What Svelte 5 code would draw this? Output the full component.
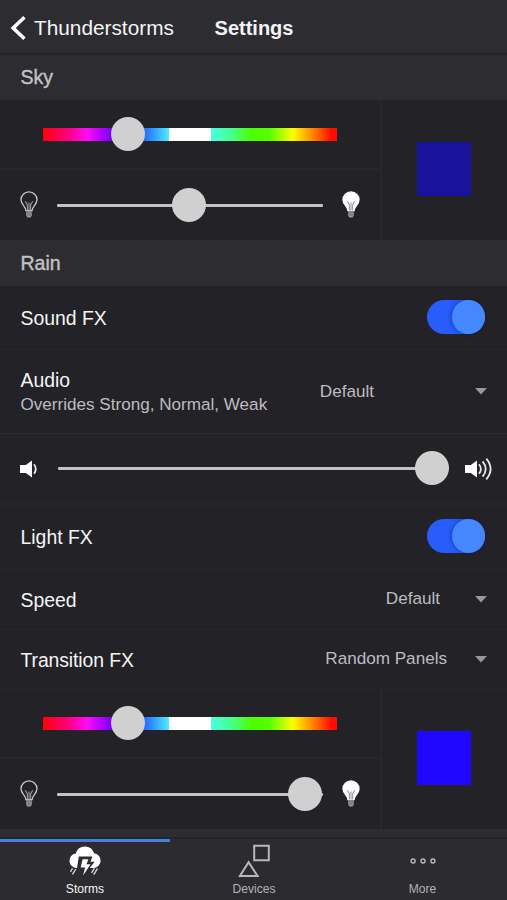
<script>
    let sky = $state({ hue: 26.2, brightness: 49.6, color: '#18129c' });
    let rain = $state({ hue: 26.2, brightness: 99.6, color: '#1f06ff' });
    let volume = $state(100);
    let soundFx = $state(true);
    let lightFx = $state(true);
    let activeTab = $state('Storms');

    const tabs = ['Storms', 'Devices', 'More'];
</script>

{#snippet bulb(on)}
    <svg class="bulb" class:on width="18" height="28" viewBox="0 0 18 28">
        <path class="glass" d="M5.9 19.6C5.7 15.5 1 13.6 1 8.8a8 7.9 0 0 1 16 0c0 4.8-4.7 6.7-4.9 10.8z" />
        <path class="wire" d="M7.4 19.5V14L5.3 10.2M10.6 19.5V14l2.1-3.8M9 19.5v-8" />
        <path class="base" d="M6.1 20.2h5.8v4.2l-1.3 2H7.4l-1.3-2z" />
        <path class="thread" d="M6.1 21.9h5.8M6.4 24.1h5.2" />
    </svg>
{/snippet}

{#snippet colorPanel(light)}
    <div class="color-panel">
        <div class="controls">
            <div class="hue-row">
                <input class="hue" type="range" step="any" aria-label="Hue" bind:value={light.hue}>
            </div>
            <div class="light-row">
                {@render bulb(false)}
                <input type="range" step="any" aria-label="Brightness" bind:value={light.brightness}>
                {@render bulb(true)}
            </div>
        </div>
        <div class="preview">
            <div class="swatch" style="background: {light.color}"></div>
        </div>
    </div>
{/snippet}

{#snippet toggle(on, flip)}
    <button class="toggle" class:on role="switch" aria-checked={on} aria-label="Toggle" onclick={flip}>
        <span class="knob"></span>
    </button>
{/snippet}

{#snippet caret()}
    <svg class="caret" width="12" height="7" viewBox="0 0 12 7"><path d="M0 0h12L6 6.6z" /></svg>
{/snippet}

<div class="screen">
    <header>
        <button class="back">
            <svg width="17" height="26" viewBox="0 0 17 26"><path d="M14.4 2.3 3.2 13l11.2 10.7" /></svg>
            <span>Thunderstorms</span>
        </button>
        <h1>Settings</h1>
    </header>

    <main>
        <h2>Sky</h2>
        {@render colorPanel(sky)}

        <h2>Rain</h2>
        <div class="row sound">
            <span class="label">Sound FX</span>
            {@render toggle(soundFx, () => (soundFx = !soundFx))}
        </div>
        <div class="row audio">
            <div class="stack">
                <span class="label">Audio</span>
                <span class="hint">Overrides Strong, Normal, Weak</span>
            </div>
            <span class="value">Default</span>
            {@render caret()}
        </div>
        <div class="row volume">
            <svg class="speaker" width="20" height="18" viewBox="0 0 20 18">
                <path class="cone" d="M0 5h5.8L12 .6v16.8L5.8 13H0z" />
                <path d="M14 4.2q3.6 4.8 0 9.6" />
            </svg>
            <input type="range" step="any" aria-label="Volume" bind:value={volume}>
            <svg class="speaker" width="28" height="24" viewBox="0 0 28 24">
                <path class="cone" d="M0 8h5.8L12 3.6v16.8L5.8 16H0z" />
                <path d="M14 7.2q3.8 4.8 0 9.6M17.6 4.4q6.2 7.6 0 15.2M21.3 1.7q8.6 10.3 0 20.6" />
            </svg>
        </div>
        <div class="row light">
            <span class="label">Light FX</span>
            {@render toggle(lightFx, () => (lightFx = !lightFx))}
        </div>
        <div class="row speed">
            <span class="label">Speed</span>
            <span class="value">Default</span>
            {@render caret()}
        </div>
        <div class="row transition">
            <span class="label">Transition FX</span>
            <span class="value">Random Panels</span>
            {@render caret()}
        </div>
        {@render colorPanel(rain)}
        <div class="next-section"></div>
    </main>

    <nav>
        {#each tabs as tab}
            <button class="tab" class:active={tab === activeTab} onclick={() => (activeTab = tab)}>
                {#if tab === 'Storms'}
                    <svg width="34" height="34" viewBox="0 0 34 34">
                        <path class="cloud" d="M8.2 24a7.3 7.3 0 0 1-.5-14.5 9.6 9.6 0 0 1 18.4-.2A7.4 7.4 0 0 1 26 24z" />
                        <path class="gap" d="M10.8 12.4h13.6l-2 5.4h4.2L15 33l2.2-7.6H8.8z" />
                        <path class="bolt" d="M14.6 15.2h5.9l-2.1 5h4.2L15 31.4l2.2-8h-4.5z" />
                        <path class="drops" d="m4.5 24.4-2 3.4M7.8 25l-3.3 5.4M26.4 24.2l-2.8 4.6M29.4 24.6l-3.6 6" />
                    </svg>
                {:else if tab === 'Devices'}
                    <svg width="34" height="34" viewBox="0 0 34 34">
                        <path class="line" d="M17.2 1.8h14.6v14.4H17.2zM11.6 18.2 20.6 32H2.9z" />
                    </svg>
                {:else}
                    <svg width="34" height="34" viewBox="0 0 34 34">
                        <g class="dots">
                            <circle cx="7.1" cy="17" r="2" />
                            <circle cx="17" cy="17" r="2" />
                            <circle cx="26.9" cy="17" r="2" />
                        </g>
                    </svg>
                {/if}
                <span>{tab}</span>
            </button>
        {/each}
    </nav>
</div>

<style>
    :global(body) {
        background: #232227;
    }
    .screen {
        display: flex;
        flex-direction: column;
        width: 507px;
        height: 900px;
        overflow: hidden;
        background: #232227;
        color: #f4f4f5;
        font-family: "Liberation Sans", Arial, sans-serif;
    }
    .screen * {
        box-sizing: border-box;
    }
    button {
        padding: 0;
        border: none;
        background: none;
        color: inherit;
        font: inherit;
        cursor: pointer;
    }
    svg {
        display: block;
        flex: none;
        fill: none;
    }

    header {
        display: grid;
        grid-template-columns: 1fr auto 1fr;
        align-items: center;
        height: 55px;
        padding: 2px 0 0 10px;
        border-bottom: 2px solid #252429;
        background: #2d2c31;
    }
    .back {
        display: flex;
        align-items: center;
        gap: 7px;
        font-size: 20.8px;
    }
    .back svg {
        stroke: #fff;
        stroke-width: 3.6;
    }
    h1 {
        margin: 0;
        padding: 1px 9px 0 0;
        font-size: 20px;
        font-weight: bold;
    }
    h2 {
        height: 46px;
        margin: 0;
        padding-left: 20.5px;
        background: #2d2c31;
        color: #c2c1c5;
        font-size: 19.5px;
        font-weight: normal;
        line-height: 46px;
        -webkit-text-stroke: 0.4px #c2c1c5;
    }
    main {
        flex: 1;
        min-height: 0;
    }
    main > h2:first-child {
        height: 45px;
        line-height: 45px;
    }

    .color-panel {
        display: flex;
        height: 140px;
    }
    .controls {
        width: 380px;
    }
    .hue-row {
        display: flex;
        align-items: center;
        height: 70px;
        padding: 0 43px;
        border-bottom: 2px solid #28272c;
    }
    .light-row {
        display: flex;
        align-items: center;
        justify-content: space-between;
        height: 70px;
        padding: 0 20px;
    }
    .preview {
        display: flex;
        align-items: center;
        flex: 1;
        padding: 0 0 2px 34.5px;
        border-left: 2px solid #28272c;
    }
    .swatch {
        width: 54px;
        height: 54px;
    }

    .row {
        display: flex;
        align-items: center;
        padding: 0 20px 0 20.5px;
        border-bottom: 1px solid #27262b;
    }
    .sound {
        height: 64px;
    }
    .audio {
        height: 84px;
        border-bottom-color: #2a292e;
    }
    .volume {
        height: 71px;
        padding: 0 14px 0 20px;
        border-bottom-width: 2px;
    }
    .light {
        height: 64px;
    }
    .speed {
        height: 61px;
    }
    .transition {
        height: 59px;
    }
    .label {
        font-size: 19.4px;
        line-height: 24px;
    }
    .speed .label, .transition .label {
        padding-top: 1px;
    }
    .transition .label {
        letter-spacing: -0.1px;
    }
    .stack {
        display: flex;
        flex-direction: column;
        gap: 2px;
        padding-top: 1px;
    }
    .hint {
        color: #bdbcc0;
        font-size: 17.1px;
        line-height: 22px;
    }
    .value {
        margin-left: auto;
        color: #bdbcc0;
        font-size: 17.1px;
    }
    .speed .value {
        margin-right: 35px;
    }
    .transition .value {
        margin-right: 28px;
    }
    .audio .value {
        margin-right: 101px;
    }
    .caret {
        fill: #98979b;
    }

    .toggle {
        display: flex;
        width: 58px;
        height: 34px;
        margin: 0 2px 2px auto;
        border-radius: 17px;
        background: #4a494e;
    }
    .light .toggle {
        margin-bottom: 1px;
    }
    .toggle.on {
        justify-content: flex-end;
        background: #285dfb;
    }
    .knob {
        width: 33px;
        height: 34px;
        border-radius: 17px;
        background: #4587ff;
        box-shadow: -1px 0 4px rgba(0, 20, 90, 0.4);
    }

    [type=range] {
        width: 266px;
        height: 34px;
        margin: 0;
        background: transparent;
        outline: none;
        cursor: pointer;
    }
    [type=range].hue {
        width: 294px;
    }
    .volume [type=range] {
        width: 392px;
        margin: 0 16px 0 18px;
    }
    [type=range], [type=range]::-webkit-slider-thumb {
        -webkit-appearance: none;
    }
    [type=range]::-webkit-slider-runnable-track {
        height: 3px;
        border-radius: 1px;
        background: #c5c3c8;
    }
    .hue[type=range]::-webkit-slider-runnable-track {
        height: 13px;
        border-radius: 0;
        background: linear-gradient(to right, #ff0008 0, #ff0088 9%, #ff0cf6 15%, #b000ff 20%, #5a00f5 25%, #1e30ff 30%, #2a80ff 36%, #50f0ff 43%, #fff 43%, #fff 57%, #48ffe8 57%, #46ff90 64%, #4cff00 71%, #55ff00 77%, #fdfd00 85%, #ff8000 92%, #ff0d00 98%);
    }
    [type=range]::-webkit-slider-thumb {
        width: 34px;
        height: 34px;
        margin-top: -16px;
        border-radius: 50%;
        background: #d0d0d0;
    }
    .hue[type=range]::-webkit-slider-thumb {
        margin-top: -11px;
    }

    .bulb .glass {
        stroke: #c9c8cc;
        stroke-width: 1.3;
    }
    .bulb .wire {
        stroke: #9b9a9f;
        stroke-width: 1.1;
    }
    .bulb .base {
        fill: #98979b;
    }
    .bulb .thread {
        stroke: #5e5d62;
        stroke-width: 0.7;
    }
    .bulb.on .glass {
        fill: #fff;
        stroke: #fff;
    }
    .speaker {
        stroke: #e8e8ea;
        stroke-width: 1.8;
    }
    .speaker .cone {
        fill: #fff;
        stroke: none;
    }

    .next-section {
        height: 8px;
        background: #2d2c31;
    }
    nav {
        display: grid;
        grid-template-columns: 170px 168px 169px;
        height: 63px;
        border-top: 2px solid #242328;
        background: #2c2b30;
    }
    .tab {
        display: flex;
        flex-direction: column;
        align-items: center;
        padding-top: 2px;
        border-top: 3px solid transparent;
        color: #b3b2b6;
        font-size: 12.1px;
        line-height: 13px;
    }
    .tab.active {
        border-top-color: #4580df;
        color: #f4f4f5;
    }
    .tab span {
        margin-top: 5px;
    }
    .cloud, .bolt {
        fill: #fff;
    }
    .gap {
        fill: #2c2b30;
    }
    .drops {
        stroke: #d5d4d8;
        stroke-width: 1.4;
    }
    .line {
        stroke: #b8b7bb;
        stroke-width: 2;
    }
    .dots {
        stroke: #b8b7bb;
        stroke-width: 1.4;
    }
</style>
